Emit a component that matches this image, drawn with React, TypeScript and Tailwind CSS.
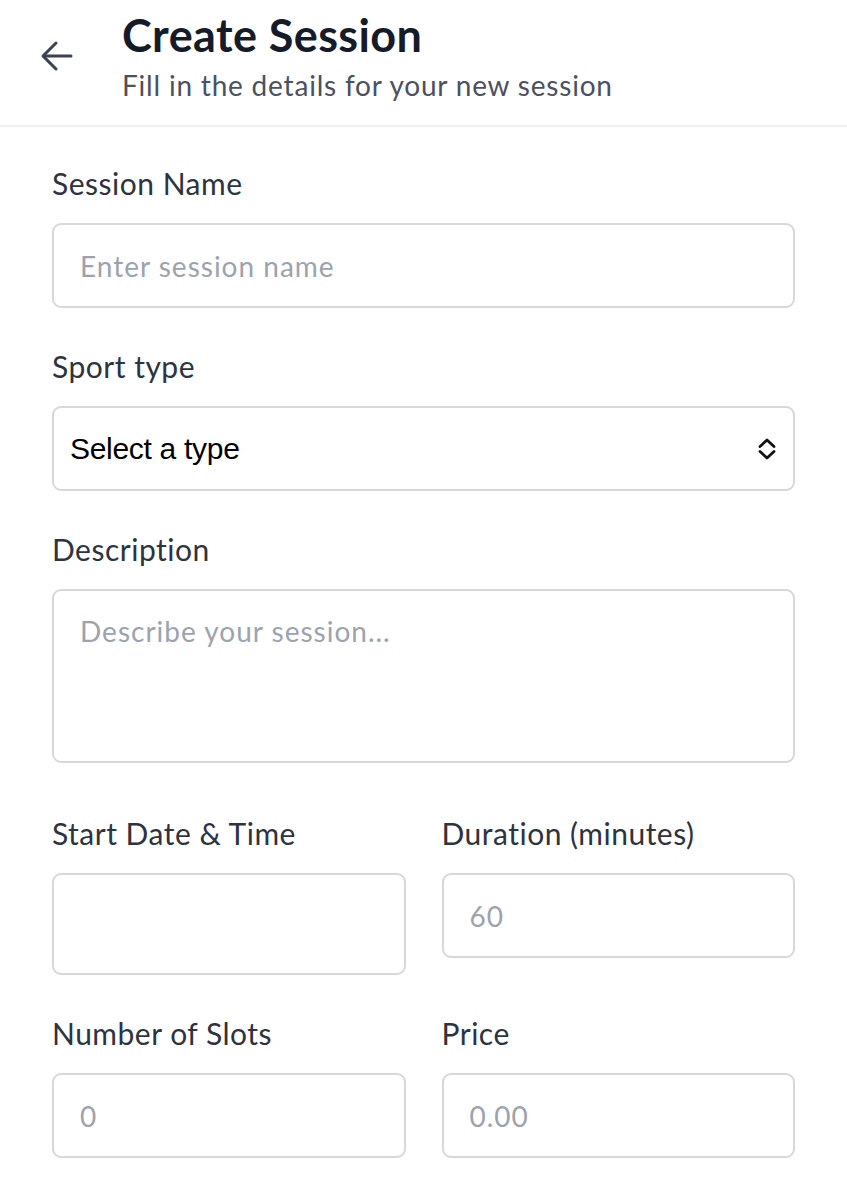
import React from "react";

function Label({ children }: { children: React.ReactNode }) {
  return (
    <div className="text-[30px] leading-[36px] tracking-[0.5px] text-[#2d3340] font-['Lato',sans-serif]">
      {children}
    </div>
  );
}

const inputCls =
  "block w-full h-[85px] rounded-[9px] border-2 border-[#d8d8db] bg-white px-[26px] text-[28px] tracking-[1px] font-['Lato',sans-serif] text-[#1f2937] placeholder:text-[#9ca3af] outline-none";

export default function App() {
  return (
    <div className="w-[847px] min-h-[1200px] bg-white font-['Lato',sans-serif]">
      <header className="flex items-start border-b-2 border-[#f1f1f2] h-[127px]">
        <div className="w-[122px] pl-[40px] pt-[40px]">
          <svg width="34" height="32" viewBox="0 0 34 32" fill="none" stroke="#3a4150" strokeWidth="3" strokeLinecap="round" strokeLinejoin="round">
            <path d="M31 16H4" />
            <path d="M16 3L3 16l13 13" />
          </svg>
        </div>
        <div className="pt-[8px]">
          <h1 className="text-[45px] leading-[54px] tracking-[0.4px] font-bold text-[#161b2a]">Create Session</h1>
          <p className="mt-[6px] text-[28px] leading-[34px] tracking-[0.8px] text-[#4b5160]">
            Fill in the details for your new session
          </p>
        </div>
      </header>

      <main className="px-[52px] pt-[38px] flex flex-col">
        <Label>Session Name</Label>
        <div className="mt-[22px]">
          <input className={inputCls} placeholder="Enter session name" />
        </div>

        <div className="mt-[40px]">
          <Label>Sport type</Label>
        </div>
        <div className="mt-[22px] h-[85px] rounded-[9px] border-2 border-[#d8d8db] bg-white flex items-center pl-[16px] pr-[15px]">
          <span className="flex-1 text-[30px] tracking-[-0.3px] text-black font-['Liberation_Sans',sans-serif]">
            Select a type
          </span>
          <svg width="22" height="24" viewBox="0 0 22 24" fill="none" stroke="#111" strokeWidth="2.8" strokeLinecap="round" strokeLinejoin="round">
            <path d="M4 9.5l7-6.5 7 6.5" />
            <path d="M4 14.5l7 6.5 7-6.5" />
          </svg>
        </div>

        <div className="mt-[40px]">
          <Label>Description</Label>
        </div>
        <div className="mt-[22px]">
          <textarea
            className="block w-full h-[174px] resize-none rounded-[9px] border-2 border-[#d8d8db] bg-white px-[26px] pt-[23px] text-[28px] leading-[34px] tracking-[1px] text-[#1f2937] placeholder:text-[#9ca3af] outline-none"
            placeholder="Describe your session..."
          />
        </div>

        <div className="mt-[52px] grid grid-cols-2 gap-x-[36px] items-start">
          <div>
            <Label>Start Date &amp; Time</Label>
            <div className="mt-[22px] h-[102px] rounded-[9px] border-2 border-[#d8d8db] bg-white" />
          </div>
          <div>
            <Label>Duration (minutes)</Label>
            <div className="mt-[22px]">
              <input className={inputCls} placeholder="60" />
            </div>
          </div>
        </div>

        <div className="mt-[40px] grid grid-cols-2 gap-x-[36px] items-start">
          <div>
            <Label>Number of Slots</Label>
            <div className="mt-[22px]">
              <input className={inputCls} placeholder="0" />
            </div>
          </div>
          <div>
            <Label>Price</Label>
            <div className="mt-[22px]">
              <input className={inputCls} placeholder="0.00" />
            </div>
          </div>
        </div>
      </main>
    </div>
  );
}
